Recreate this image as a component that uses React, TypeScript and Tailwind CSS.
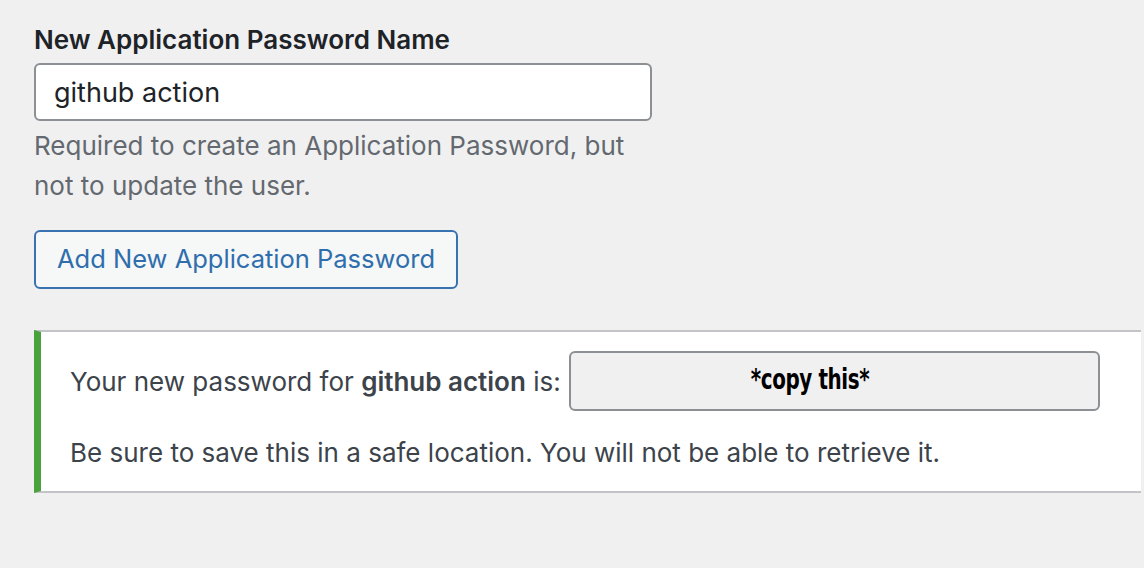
export default function App() {
  return (
    <div className="min-h-[568px] w-[1144px] overflow-hidden bg-[#f0f0f1] font-['Inter','Roboto',sans-serif]">
      <div className="pl-[34px] pt-[25px]">
        {/* name field */}
        <label className="block text-[26px] leading-[30px] font-semibold text-[#1d2327]">
          New Application Password Name
        </label>
        <input
          type="text"
          defaultValue="github action"
          className="mt-[8px] block h-[58px] w-[618px] rounded-[6px] border-2 border-[#8c8f94] bg-white px-[18px] text-[27px] text-[#1d2327] outline-none"
        />
        <p className="mt-[5px] w-[600px] text-[26px] leading-[40px] text-[#646970]">
          Required to create an Application Password, but not to update the user.
        </p>

        <button className="mt-[24px] flex h-[59px] items-center rounded-[6px] border-2 border-[#3872b0] bg-[#f6f7f7] px-[21px] text-[25.5px] text-[#2f6ead]">
          Add New Application Password
        </button>

        {/* success notice */}
        <div className="mt-[41px] w-[1107px] border-y-2 border-l-[7px] border-y-[#c3c4c7] border-l-[#4aa23c] bg-white pl-[29px] pt-[19px] pb-[22px]">
          <div className="flex items-center text-[26px] text-[#3c434a]">
            <span>
              Your new password for <strong className="font-semibold">github action</strong> is:
            </span>
            <div className="ml-[8px] flex h-[60px] w-[531px] items-center justify-center rounded-[6px] border-2 border-[#8c8f94] bg-[#f0f0f1] pr-[48px] pb-[2px]">
              <span className="inline-block scale-x-[0.79] font-['DejaVu_Sans_Condensed','Liberation_Sans',sans-serif] text-[28px] leading-[32px] font-bold tracking-[-0.5px] text-black">
                *copy this*
              </span>
            </div>
          </div>
          <p className="mt-[26px] text-[26px] leading-[32px] text-[#3c434a]">
            Be sure to save this in a safe location. You will not be able to retrieve it.
          </p>
        </div>
      </div>
    </div>
  )
}
